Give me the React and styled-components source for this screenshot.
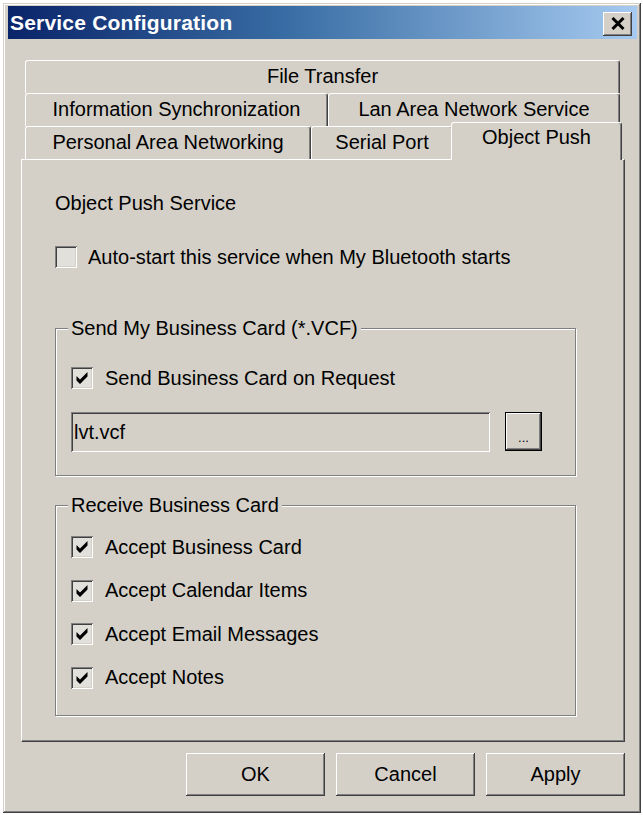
import styled, { createGlobalStyle } from "styled-components";

const face = "#d4d0c8";

const GlobalStyle = createGlobalStyle`
  html, body {
    margin: 0;
    padding: 0;
    background: #ffffff;
  }
  body {
    font-family: "Liberation Sans", Arial, sans-serif;
    font-size: 20px;
    color: #000;
  }
  * {
    box-sizing: border-box;
  }
`;

const Window = styled.div`
  margin: 3px 0 0 3px;
  width: 638px;
  height: 810px;
  background: ${face};
  box-shadow: inset -1px -1px #404040, inset 1px 1px ${face},
    inset -2px -2px #808080, inset 2px 2px #ffffff;
  padding: 3px 4px 3px 5px;
  display: flex;
  flex-direction: column;
`;

const TitleBar = styled.div`
  height: 33px;
  display: flex;
  align-items: center;
  justify-content: space-between;
  padding: 0 5px 0 2px;
  background: linear-gradient(to right, #0a246a 0%, #3a6ea5 45%, #a6caf0 100%);
`;

const Title = styled.span`
  color: #ffffff;
  font-weight: bold;
  font-size: 21px;
  letter-spacing: 0.2px;
`;

const CloseButton = styled.button`
  width: 29px;
  height: 24px;
  margin-top: 2px;
  padding: 0;
  border: none;
  background: ${face};
  display: flex;
  align-items: center;
  justify-content: center;
  box-shadow: inset -1px -1px #404040, inset 1px 1px #ffffff,
    inset -2px -2px #808080, inset 2px 2px ${face};
`;

const Body = styled.div`
  flex: 1;
  display: flex;
  flex-direction: column;
  padding: 21px 12px 0 13px;
`;

const TabStrip = styled.div`
  display: flex;
  flex-direction: column;
`;

const TabRow = styled.div`
  height: 33px;
  display: flex;
  padding: 0 5px 0 4px;
`;

const Tab = styled.div`
  flex: ${(p) => (p.$w ? `0 0 ${p.$w}px` : "1 1 0")};
  display: flex;
  align-items: center;
  justify-content: center;
  background: ${face};
  border-top: 1px solid #ffffff;
  border-left: 1px solid #ffffff;
  border-right: 1px solid #404040;
  border-radius: 3px 3px 0 0;
  box-shadow: inset -1px 0 #808080;
  white-space: nowrap;
  padding-bottom: 2px;
  ${(p) =>
    p.$active &&
    `
    margin: -4px -2px -1px;
    position: relative;
    z-index: 1;
    padding-bottom: 8px;
  `}
`;

const Panel = styled.div`
  height: 583px;
  border: 1px solid;
  border-color: #ffffff #404040 #404040 #ffffff;
  box-shadow: inset -1px -1px #808080;
  padding: 31px 48px 0 33px;
  display: flex;
  flex-direction: column;
`;

const Heading = styled.div`
  line-height: 24px;
`;

const CheckRow = styled.label`
  display: flex;
  align-items: center;
  gap: ${(p) => p.$gap || 12}px;
  height: 24px;
  margin-top: ${(p) => p.$top || 0}px;
  white-space: nowrap;
`;

const Box = styled.span`
  width: 22px;
  height: 22px;
  flex: 0 0 22px;
  background: #e2e0da;
  display: flex;
  align-items: center;
  justify-content: center;
  box-shadow: inset 1px 1px #808080, inset -1px -1px #ffffff,
    inset 2px 2px #404040, inset -2px -2px ${face};
`;

const Group = styled.div`
  margin-top: ${(p) => p.$top}px;
  border: 1px solid #808080;
  box-shadow: inset 1px 1px #ffffff, 1px 1px #ffffff;
  padding: 0 0 ${(p) => p.$bottom}px 15px;
  display: flex;
  flex-direction: column;
`;

const GroupTitle = styled.div`
  align-self: flex-start;
  margin: -13px 0 0 -3px;
  padding: 0 3px;
  line-height: 24px;
  background: ${face};
`;

const ChecksList = styled.div`
  display: flex;
  flex-direction: column;
  gap: 19.5px;
  margin-top: 18px;
`;

const FileRow = styled.div`
  display: flex;
  align-items: flex-start;
  gap: 15px;
  margin-top: 22px;
`;

const FileField = styled.div`
  width: 419px;
  height: 40px;
  display: flex;
  align-items: center;
  padding-left: 3px;
  background: ${face};
  box-shadow: inset 1px 1px #808080, inset -1px -1px #ffffff,
    inset 2px 2px #404040, inset -2px -2px ${face};
`;

const BrowseButton = styled.button`
  width: 37px;
  height: 39px;
  padding: 0 0 5px;
  border: 1px solid #000000;
  background: ${face};
  font-family: inherit;
  font-size: 13px;
  display: flex;
  align-items: flex-end;
  justify-content: center;
  box-shadow: inset -1px -1px #404040, inset 1px 1px #ffffff,
    inset -2px -2px #808080;
`;

const ButtonRow = styled.div`
  display: flex;
  justify-content: flex-end;
  gap: 11px;
  margin-top: 11px;
`;

const Button = styled.button`
  width: 139px;
  height: 43px;
  border: none;
  background: ${face};
  font-family: inherit;
  font-size: 20px;
  color: #000;
  box-shadow: inset -1px -1px #404040, inset 1px 1px #ffffff,
    inset -2px -2px #808080, inset 2px 2px ${face};
`;

const CloseIcon = () => (
  <svg width="14" height="13" viewBox="0 0 14 13">
    <path d="M1.5 1 L12.5 12 M12.5 1 L1.5 12" stroke="#000" strokeWidth="3" />
  </svg>
);

const Tick = () => (
  <svg width="14" height="14" viewBox="0 0 14 14">
    <path d="M1.5 5 L5 8.5 L12.5 1 L12.5 5.5 L5 13 L1.5 9.5 Z" fill="#000" />
  </svg>
);

const Check = ({ checked, gap, top, children }) => (
  <CheckRow $gap={gap} $top={top}>
    <Box>{checked && <Tick />}</Box>
    {children}
  </CheckRow>
);

const receiveItems = [
  "Accept Business Card",
  "Accept Calendar Items",
  "Accept Email Messages",
  "Accept Notes",
];

const App = () => {
  return (
    <>
      <GlobalStyle />
      <Window>
        <TitleBar>
          <Title>Service Configuration</Title>
          <CloseButton>
            <CloseIcon />
          </CloseButton>
        </TitleBar>
        <Body>
          <TabStrip>
            <TabRow>
              <Tab>File Transfer</Tab>
            </TabRow>
            <TabRow>
              <Tab $w={303}>Information Synchronization</Tab>
              <Tab $w={292}>Lan Area Network Service</Tab>
            </TabRow>
            <TabRow>
              <Tab $w={286}>Personal Area Networking</Tab>
              <Tab $w={142}>Serial Port</Tab>
              <Tab $w={171} $active>
                Object Push
              </Tab>
            </TabRow>
          </TabStrip>
          <Panel>
            <Heading>Object Push Service</Heading>
            <Check top={30} gap={11}>
              Auto-start this service when My Bluetooth starts
            </Check>
            <Group $top={59} $bottom={23}>
              <GroupTitle>Send My Business Card (*.VCF)</GroupTitle>
              <Check checked top={26}>
                Send Business Card on Request
              </Check>
              <FileRow>
                <FileField>lvt.vcf</FileField>
                <BrowseButton>...</BrowseButton>
              </FileRow>
            </Group>
            <Group $top={29} $bottom={25}>
              <GroupTitle>Receive Business Card</GroupTitle>
              <ChecksList>
                {receiveItems.map((item) => (
                  <Check checked key={item}>
                    {item}
                  </Check>
                ))}
              </ChecksList>
            </Group>
          </Panel>
          <ButtonRow>
            <Button>OK</Button>
            <Button>Cancel</Button>
            <Button>Apply</Button>
          </ButtonRow>
        </Body>
      </Window>
    </>
  );
};

export default App;
